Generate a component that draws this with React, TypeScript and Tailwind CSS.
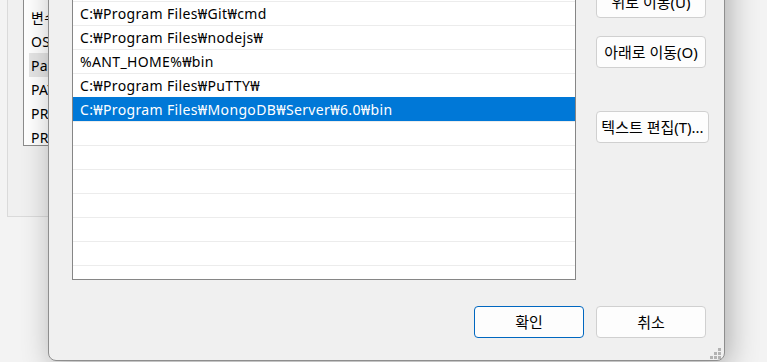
const font = "font-['Noto_Sans','Noto_Sans_CJK_KR',sans-serif]";

const rows = [
  "%SystemRoot%₩System32₩OpenSSH₩",
  "C:₩Program Files₩Git₩cmd",
  "C:₩Program Files₩nodejs₩",
  "%ANT_HOME%₩bin",
  "C:₩Program Files₩PuTTY₩",
  "C:₩Program Files₩MongoDB₩Server₩6.0₩bin",
  "",
  "",
  "",
  "",
  "",
  "",
  "",
];

const selected = 5;

const varRows = ["변수", "OS", "Path", "PATH", "PROCESSOR_ARCHITECTURE", "PROCESSOR_IDENTIFIER"];

function Btn({ label, w = "w-[110px]", primary = false }: { label: string; w?: string; primary?: boolean }) {
  return (
    <button
      className={
        "h-[32px] shrink-0 rounded-[4px] bg-[#fdfdfd] text-[15px] text-black leading-none " +
        w +
        (primary ? " border border-[#0067c0]" : " border border-[#d0d0d0]")
      }
    >
      {label}
    </button>
  );
}

export default function App() {
  return (
    <div className={`relative h-[362px] w-[767px] overflow-hidden bg-[#f3f3f3] ${font}`}>
      {/* background window: environment variables panel */}
      <div className="absolute left-[7px] top-[-40px] h-[257px] w-[42px] overflow-hidden border-l border-b border-[#dadada] bg-[#f0f0f0] pl-[15px] pt-[15px]">
        <div className="h-[171px] w-[300px] border border-[#8c8c8c] bg-white">
          <div className="flex flex-col pt-[29px]">
            {varRows.map((v, i) => (
              <div
                key={v}
                className={
                  "ml-[5px] flex h-[24px] items-center whitespace-nowrap pl-[2px] text-[14px] tracking-[0.35px] text-black " +
                  (i === 2 ? "bg-[#e5e5e5]" : "")
                }
              >
                {v}
              </div>
            ))}
          </div>
        </div>
      </div>

      {/* foreground dialog: edit environment variable */}
      <div className="absolute left-[48px] top-[-48px] flex h-[409px] w-[677px] flex-col rounded-b-[8px] border border-[#8e8e8e] bg-[#f0f0f0] pl-[23px] pr-[14px] pt-[23px] shadow-[4px_6px_30px_rgba(0,0,0,0.3)]">
        <div className="flex gap-[20px]">
          <div className="h-[304px] w-[504px] shrink-0 overflow-hidden border border-[#868686] bg-white">
            {rows.map((r, i) => (
              <div
                key={i}
                className={
                  "flex h-[24px] items-center border-t pl-[7px] text-[14px] tracking-[0.35px] " +
                  (i === selected
                    ? "border-[#0078d7] bg-[#0078d7] text-white"
                    : "border-[#ececec] text-black")
                }
              >
                {r}
              </div>
            ))}
          </div>
          <div className="flex shrink-0 flex-col pt-[10px]">
            <Btn label="위로 이동(U)" />
            <div className="mt-[18px]">
              <Btn label="아래로 이동(O)" />
            </div>
            <div className="mt-[43px]">
              <Btn label="텍스트 편집(T)..." w="w-[113px]" />
            </div>
          </div>
        </div>
        <div className="mt-[26px] flex justify-end gap-[12px] pr-[4px]">
          <Btn label="확인" primary />
          <Btn label="취소" />
        </div>

        {/* resize grip */}
        <svg className="absolute bottom-[0px] right-[2px] h-[12px] w-[12px]" viewBox="0 0 12 12">
          <g fill="#b3b3b3">
            <rect x="8" y="0" width="3" height="3" />
            <rect x="4" y="4" width="3" height="3" />
            <rect x="8" y="4" width="3" height="3" />
            <rect x="0" y="8" width="3" height="3" />
            <rect x="4" y="8" width="3" height="3" />
            <rect x="8" y="8" width="3" height="3" />
          </g>
        </svg>
      </div>
    </div>
  );
}
